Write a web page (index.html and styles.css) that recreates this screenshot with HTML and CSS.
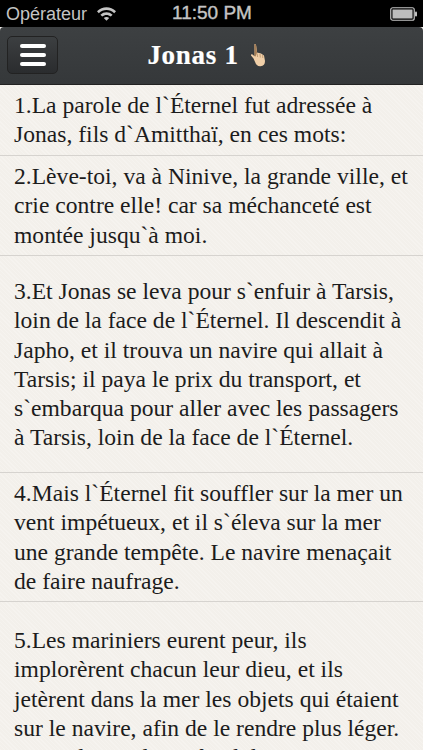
FILE: index.html
```html
<!DOCTYPE html>
<html lang="fr">
<head>
<meta charset="utf-8">
<title>Jonas 1</title>
<link rel="stylesheet" href="styles.css">
</head>
<body>
<div class="status">
  <div class="status-left">
    <span>Opérateur</span>
    <svg class="wifi" width="21" height="15" viewBox="0 0 21 15"><path d="M1 5.2C6.4 0 14.6 0 20 5.2L18.2 7.2C13.8 3 7.2 3 2.8 7.2Z M4.4 8.7C7.9 5.4 13.1 5.4 16.6 8.7L14.8 10.6C12.3 8.4 8.7 8.4 6.2 10.6Z M7.8 12C9.4 10.7 11.6 10.7 13.2 12L10.5 14.8Z" fill="#c4c4c4"/></svg>
  </div>
  <div class="status-time">11:50 PM</div>
  <div class="status-right">
    <svg width="28" height="14" viewBox="0 0 28 14"><rect x="0.75" y="0.75" width="23.5" height="12.5" rx="2" fill="none" stroke="#c4c4c4" stroke-width="1.2"/><rect x="2.5" y="2.5" width="20" height="9" fill="#bdbdbd"/><rect x="25" y="4.5" width="2" height="5" rx="1" fill="#c4c4c4"/></svg>
  </div>
</div>
<header class="navbar">
  <button class="menu" aria-label="Menu"><span></span><span></span><span></span></button>
  <h1 class="title">Jonas 1
    <svg class="hand" width="16" height="24" viewBox="0 0 16 24"><path d="M4.5 1C5.5.6 6 1.5 6.2 3L7 9.5 11 10.5 14 12.5 15 18C15 21.5 13.5 23 10.5 23.2 7.5 23.4 6 21.5 5.3 19.5L3.5 15.5 1 12.5C.7 11.3 1.7 11 2.5 11.6L4.6 13.2Z" fill="#f0cfa8"/><path d="M7.2 10.5 7.6 14M10 11 10.3 14.5M12.6 12 12.8 15" stroke="#b08a60" stroke-width=".7" fill="none"/><path d="M4.5 1C5.5.6 6 1.5 6.2 3L7 9.5 5.6 13.5 4.6 13.2Z" fill="#a57d55"/></svg>
  </h1>
</header>
<main class="verses">
  <p class="verse v1">1.La parole de l`Éternel fut adressée à<br>Jonas, fils d`Amitthaï, en ces mots:</p>
  <p class="verse v2">2.Lève-toi, va à Ninive, la grande ville, et<br>crie contre elle! car sa méchanceté est<br>montée jusqu`à moi.</p>
  <p class="verse v3">3.Et Jonas se leva pour s`enfuir à Tarsis,<br>loin de la face de l`Éternel. Il descendit à<br>Japho, et il trouva un navire qui allait à<br>Tarsis; il paya le prix du transport, et<br>s`embarqua pour aller avec les passagers<br>à Tarsis, loin de la face de l`Éternel.</p>
  <p class="verse v4">4.Mais l`Éternel fit souffler sur la mer un<br>vent impétueux, et il s`éleva sur la mer<br>une grande tempête. Le navire menaçait<br>de faire naufrage.</p>
  <p class="verse v5">5.Les mariniers eurent peur, ils<br>implorèrent chacun leur dieu, et ils<br>jetèrent dans la mer les objets qui étaient<br>sur le navire, afin de le rendre plus léger.<br>Jonas descendit au fond du navire,</p>
</main>
</body>
</html>
```
FILE: styles.css
```css
* { box-sizing: border-box; }
html, body { margin: 0; padding: 0; height: 100%; overflow: hidden; }
body { width: 423px; height: 750px; background: #f3f0eb repeating-linear-gradient(45deg, rgba(255,255,255,.22) 0 1px, transparent 1px 3px); display: flex; flex-direction: column; }
.status { height: 27px; flex: none; background: #000; color: #c4c4c4; font: 18px/26px "Liberation Sans", sans-serif; display: grid; grid-template-columns: 1fr auto 1fr; padding: 0 5px 0 6px; }
.status-left { display: flex; align-items: center; gap: 9px; }
.status-time { font-size: 19px; -webkit-text-stroke: .4px #c4c4c4; }
.status-right { display: flex; justify-content: flex-end; align-items: center; }
.navbar { height: 58px; flex: none; background: linear-gradient(#3d4042, #35383a); border-bottom: 1px solid #222; border-radius: 4px 4px 0 0; padding: 0 10px 2px 0; display: flex; align-items: center; justify-content: center; position: relative; }
.menu { position: absolute; left: 7px; top: 9px; width: 51px; height: 38px; padding: 0; border: 1px solid #222; border-radius: 5px; background: linear-gradient(#3c3f41, #2a2c2e); display: flex; flex-direction: column; align-items: center; justify-content: center; gap: 5px; }
.menu span { width: 26px; height: 4px; border-radius: 2px; background: #fff; }
.title { margin: 0; color: #fff; font: 700 27px/30px "Liberation Serif", serif; letter-spacing: .7px; display: flex; align-items: center; gap: 11px; -webkit-text-stroke: .2px #fff; }
.verses { flex: none; }
.verse { margin: 0; padding: 0 14px; color: #1c1c1c; font: 23.6px/29.3px "Liberation Serif", serif; white-space: nowrap; border-bottom: 1px solid #d6d3cf; }
.v1 { height: 71px; padding-top: 6px; }
.v2 { height: 100px; padding-top: 6px; }
.v3 { height: 217px; padding-top: 21px; }
.v4 { height: 129px; padding-top: 6px; }
.v5 { height: 149px; padding-top: 24px; border-bottom: 0; overflow: hidden; }
```
